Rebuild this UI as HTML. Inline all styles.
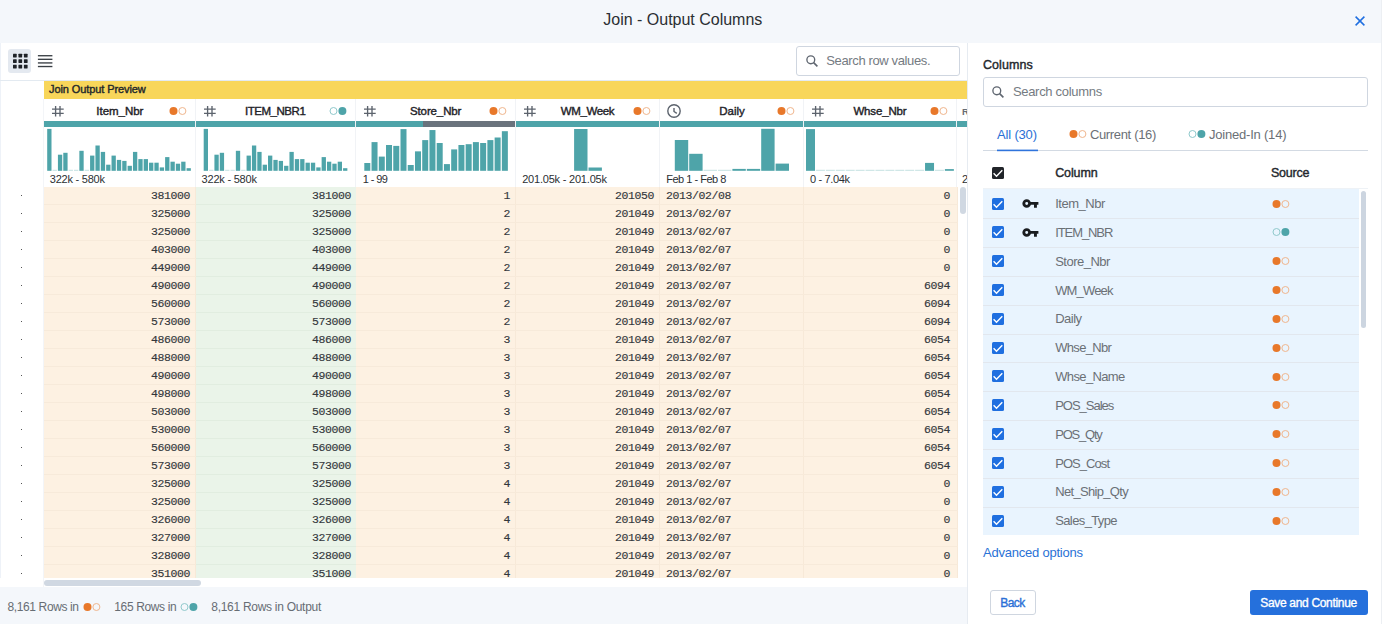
<!DOCTYPE html>
<html><head><meta charset="utf-8">
<style>
*{box-sizing:border-box;margin:0;padding:0}
html,body{width:1382px;height:624px;overflow:hidden;background:#fff;font-family:"Liberation Sans",sans-serif}
body{position:relative}
.a{position:absolute;display:block}
.t{position:absolute;white-space:nowrap}
.colsep{position:absolute;top:99px;height:88px;width:1px;background:#f1f3f6}
.teal{position:absolute;top:121px;height:6px;background:#4ea4a9}
.cell{position:absolute;height:18px;border-bottom:1px solid rgba(120,90,40,0.045);font:11.5px/18px "Liberation Mono",monospace;letter-spacing:-0.4px;color:#33373c;padding:0 5px 0 6px;-webkit-text-stroke:0.15px #33373c}
.o{background:#fdf1e2;border-right:1px solid rgba(150,110,50,0.05)}
.g{background:#eaf4e9;border-bottom-color:rgba(40,90,40,0.045)}
.r{text-align:right}
.rowdot{position:absolute;left:21px;width:1px;height:1px;background:#555}
</style></head><body>

<div class="a" style="left:0;top:0;width:1382px;height:43px;background:#f4f7fb"></div>
<div class="t" style="left:603.30px;top:12px;font:normal 16px/1 'Liberation Sans',sans-serif;color:#2b2f33;letter-spacing:-0.009px;">Join - Output Columns</div>
<svg class="a" style="left:1354.7px;top:15.5px" width="10" height="10" viewBox="0 0 10 10"><path d="M0.6 0.6L9.4 9.4M9.4 0.6L0.6 9.4" stroke="#1f6fe0" stroke-width="1.5"/></svg>
<div class="a" style="left:0;top:43px;width:1px;height:545px;background:#eef2f8"></div>
<div class="a" style="left:1381px;top:0;width:1px;height:624px;background:#eceff3"></div>
<div class="a" style="left:8px;top:49px;width:23px;height:24px;border-radius:3px;background:#e4e9f0"></div>
<svg class="a" style="left:0;top:40px" width="60" height="40" viewBox="0 40 60 40"><rect x="13.00" y="53.80" width="3.7" height="3.7" rx="0.4" fill="#1e2227"/><rect x="18.45" y="53.80" width="3.7" height="3.7" rx="0.4" fill="#1e2227"/><rect x="23.90" y="53.80" width="3.7" height="3.7" rx="0.4" fill="#1e2227"/><rect x="13.00" y="59.25" width="3.7" height="3.7" rx="0.4" fill="#1e2227"/><rect x="18.45" y="59.25" width="3.7" height="3.7" rx="0.4" fill="#1e2227"/><rect x="23.90" y="59.25" width="3.7" height="3.7" rx="0.4" fill="#1e2227"/><rect x="13.00" y="64.70" width="3.7" height="3.7" rx="0.4" fill="#1e2227"/><rect x="18.45" y="64.70" width="3.7" height="3.7" rx="0.4" fill="#1e2227"/><rect x="23.90" y="64.70" width="3.7" height="3.7" rx="0.4" fill="#1e2227"/><rect x="37.9" y="55.05" width="14.5" height="1.35" fill="#3a3f45"/><rect x="37.9" y="58.65" width="14.5" height="1.35" fill="#3a3f45"/><rect x="37.9" y="62.25" width="14.5" height="1.35" fill="#3a3f45"/><rect x="37.9" y="65.85" width="14.5" height="1.35" fill="#3a3f45"/></svg>
<div class="a" style="left:796px;top:46px;width:164px;height:30px;border:1px solid #cfd6e0;border-radius:3px;background:#fff"></div>
<svg class="a" style="left:806px;top:55.3px" width="13" height="12" viewBox="0 0 13 12"><circle cx="4.8" cy="4.8" r="3.9" stroke="#5f6670" stroke-width="1.35" fill="none"/><path d="M7.6 7.6L11.4 11.4" stroke="#5f6670" stroke-width="1.6"/></svg>
<div class="t" style="left:826.30px;top:54px;font:normal 13px/1 'Liberation Sans',sans-serif;color:#757b82;letter-spacing:-0.374px;">Search row values.</div>
<div class="a" style="left:967px;top:43px;width:1px;height:581px;background:#e6ebf1"></div>
<div class="a" style="left:0;top:80px;width:967px;height:1px;background:#e3eaf1"></div>
<div class="a" style="left:44px;top:81px;width:923px;height:18px;background:#f8d65a"></div>
<div class="t" style="left:49.00px;top:84px;font:normal 11px/1 'Liberation Sans',sans-serif;color:#23272b;letter-spacing:-0.094px;-webkit-text-stroke:0.4px #23272b;">Join Output Preview</div>
<div class="colsep" style="left:195px"></div>
<svg class="a" style="left:52px;top:105px" width="13" height="12" viewBox="0 0 13 12"><path d="M3.6 1V11.4M8 1V11.4M0 4.1H11.7M0 8.3H11.7" stroke="#5c636d" stroke-width="1.35" fill="none"/></svg>
<div class="t" style="left:96.30px;top:106px;font:normal 11.5px/1 'Liberation Sans',sans-serif;color:#1e2227;letter-spacing:-0.026px;-webkit-text-stroke:0.4px #1e2227;">Item_Nbr</div>
<svg class="a" style="left:168.50px;top:105.75px" width="18" height="10" viewBox="0 0 18 10"><circle cx="4.5" cy="5" r="4" fill="#e8782a"/><circle cx="13.4" cy="5" r="3.5" fill="none" stroke="#f0b68e" stroke-width="1"/></svg>
<div class="teal" style="left:44px;width:151px"></div>
<div class="t" style="left:49.80px;top:174px;font:normal 11px/1 'Liberation Sans',sans-serif;color:#2b2f33;letter-spacing:-0.230px;">322k - 580k</div>
<div class="colsep" style="left:355px"></div>
<svg class="a" style="left:204px;top:105px" width="13" height="12" viewBox="0 0 13 12"><path d="M3.6 1V11.4M8 1V11.4M0 4.1H11.7M0 8.3H11.7" stroke="#5c636d" stroke-width="1.35" fill="none"/></svg>
<div class="t" style="left:244.90px;top:106px;font:normal 11.5px/1 'Liberation Sans',sans-serif;color:#1e2227;letter-spacing:-0.454px;-webkit-text-stroke:0.4px #1e2227;">ITEM_NBR1</div>
<svg class="a" style="left:328.50px;top:105.75px" width="18" height="10" viewBox="0 0 18 10"><circle cx="4.5" cy="5" r="3.5" fill="none" stroke="#90c9cc" stroke-width="1"/><circle cx="13.4" cy="5" r="4" fill="#4ea4a9"/></svg>
<div class="teal" style="left:196px;width:159px"></div>
<div class="t" style="left:201.60px;top:174px;font:normal 11px/1 'Liberation Sans',sans-serif;color:#2b2f33;letter-spacing:-0.220px;">322k - 580k</div>
<div class="colsep" style="left:515px"></div>
<svg class="a" style="left:364px;top:105px" width="13" height="12" viewBox="0 0 13 12"><path d="M3.6 1V11.4M8 1V11.4M0 4.1H11.7M0 8.3H11.7" stroke="#5c636d" stroke-width="1.35" fill="none"/></svg>
<div class="t" style="left:410.00px;top:106px;font:normal 11.5px/1 'Liberation Sans',sans-serif;color:#1e2227;letter-spacing:-0.126px;-webkit-text-stroke:0.4px #1e2227;">Store_Nbr</div>
<svg class="a" style="left:488.50px;top:105.75px" width="18" height="10" viewBox="0 0 18 10"><circle cx="4.5" cy="5" r="4" fill="#e8782a"/><circle cx="13.4" cy="5" r="3.5" fill="none" stroke="#f0b68e" stroke-width="1"/></svg>
<div class="teal" style="left:356px;width:67px"></div><div class="teal" style="left:423px;width:92px;background:#6a737d"></div>
<div class="t" style="left:362.70px;top:174px;font:normal 11px/1 'Liberation Sans',sans-serif;color:#2b2f33;letter-spacing:-0.565px;">1 - 99</div>
<div class="colsep" style="left:659px"></div>
<svg class="a" style="left:524px;top:105px" width="13" height="12" viewBox="0 0 13 12"><path d="M3.6 1V11.4M8 1V11.4M0 4.1H11.7M0 8.3H11.7" stroke="#5c636d" stroke-width="1.35" fill="none"/></svg>
<div class="t" style="left:560.70px;top:106px;font:normal 11.5px/1 'Liberation Sans',sans-serif;color:#1e2227;letter-spacing:-0.360px;-webkit-text-stroke:0.4px #1e2227;">WM_Week</div>
<svg class="a" style="left:632.50px;top:105.75px" width="18" height="10" viewBox="0 0 18 10"><circle cx="4.5" cy="5" r="4" fill="#e8782a"/><circle cx="13.4" cy="5" r="3.5" fill="none" stroke="#f0b68e" stroke-width="1"/></svg>
<div class="teal" style="left:516px;width:143px"></div>
<div class="t" style="left:522.20px;top:174px;font:normal 11px/1 'Liberation Sans',sans-serif;color:#2b2f33;letter-spacing:-0.206px;">201.05k - 201.05k</div>
<div class="colsep" style="left:803px"></div>
<svg class="a" style="left:667px;top:104px" width="14" height="14" viewBox="0 0 14 14"><circle cx="7" cy="7" r="6.2" stroke="#5c636d" stroke-width="1.4" fill="none"/><path d="M7 3.9V7.5L9.8 9.4" stroke="#5c636d" stroke-width="1.4" fill="none"/></svg>
<div class="t" style="left:719.20px;top:106px;font:normal 11.5px/1 'Liberation Sans',sans-serif;color:#1e2227;letter-spacing:0.009px;-webkit-text-stroke:0.4px #1e2227;">Daily</div>
<svg class="a" style="left:776.50px;top:105.75px" width="18" height="10" viewBox="0 0 18 10"><circle cx="4.5" cy="5" r="4" fill="#e8782a"/><circle cx="13.4" cy="5" r="3.5" fill="none" stroke="#f0b68e" stroke-width="1"/></svg>
<div class="teal" style="left:660px;width:143px"></div>
<div class="t" style="left:666.20px;top:174px;font:normal 11px/1 'Liberation Sans',sans-serif;color:#2b2f33;letter-spacing:-0.486px;">Feb 1 - Feb 8</div>
<div class="colsep" style="left:956px"></div>
<svg class="a" style="left:812px;top:105px" width="13" height="12" viewBox="0 0 13 12"><path d="M3.6 1V11.4M8 1V11.4M0 4.1H11.7M0 8.3H11.7" stroke="#5c636d" stroke-width="1.35" fill="none"/></svg>
<div class="t" style="left:853.40px;top:106px;font:normal 11.5px/1 'Liberation Sans',sans-serif;color:#1e2227;letter-spacing:-0.145px;-webkit-text-stroke:0.4px #1e2227;">Whse_Nbr</div>
<svg class="a" style="left:929.50px;top:105.75px" width="18" height="10" viewBox="0 0 18 10"><circle cx="4.5" cy="5" r="4" fill="#e8782a"/><circle cx="13.4" cy="5" r="3.5" fill="none" stroke="#f0b68e" stroke-width="1"/></svg>
<div class="teal" style="left:804px;width:152px"></div>
<div class="t" style="left:810.00px;top:174px;font:normal 11px/1 'Liberation Sans',sans-serif;color:#2b2f33;letter-spacing:-0.343px;">0 - 7.04k</div>
<div class="a" style="left:957px;top:121px;width:10px;height:6px;background:#4ea4a9"></div>
<div class="a" style="left:961px;top:99px;width:6px;height:22px;overflow:hidden"><div class="t" style="left:1px;top:8px;font:bold 9.5px/1 'Liberation Sans';color:#666d76">RBC</div></div>
<div class="a" style="left:957px;top:172px;width:10px;height:14px;overflow:hidden"><div class="t" style="left:5.00px;top:2px;font:normal 11px/1 'Liberation Sans',sans-serif;color:#2b2f33;letter-spacing:0.000px;">2</div></div>
<svg class="a" style="left:0;top:120px" width="967" height="55" viewBox="0 120 967 55"><rect x="47.20" y="128.90" width="4.3" height="41.90" fill="#4ea4a9"/><rect x="52.56" y="169.80" width="4.3" height="1" fill="#c5e1e2"/><rect x="57.92" y="154.70" width="4.3" height="16.10" fill="#4ea4a9"/><rect x="63.28" y="152.80" width="4.3" height="18.00" fill="#4ea4a9"/><rect x="68.64" y="169.80" width="4.3" height="1" fill="#c5e1e2"/><rect x="74.00" y="169.80" width="4.3" height="1" fill="#c5e1e2"/><rect x="79.36" y="150.80" width="4.3" height="20.00" fill="#4ea4a9"/><rect x="84.72" y="169.80" width="4.3" height="1" fill="#c5e1e2"/><rect x="90.08" y="155.60" width="4.3" height="15.20" fill="#4ea4a9"/><rect x="95.44" y="145.50" width="4.3" height="25.30" fill="#4ea4a9"/><rect x="100.80" y="151.90" width="4.3" height="18.90" fill="#4ea4a9"/><rect x="106.16" y="164.70" width="4.3" height="6.10" fill="#4ea4a9"/><rect x="111.52" y="155.60" width="4.3" height="15.20" fill="#4ea4a9"/><rect x="116.88" y="159.90" width="4.3" height="10.90" fill="#4ea4a9"/><rect x="122.24" y="160.90" width="4.3" height="9.90" fill="#4ea4a9"/><rect x="127.60" y="165.80" width="4.3" height="5.00" fill="#4ea4a9"/><rect x="132.96" y="151.90" width="4.3" height="18.90" fill="#4ea4a9"/><rect x="138.32" y="159.10" width="4.3" height="11.70" fill="#4ea4a9"/><rect x="143.68" y="159.10" width="4.3" height="11.70" fill="#4ea4a9"/><rect x="149.04" y="162.70" width="4.3" height="8.10" fill="#4ea4a9"/><rect x="154.40" y="162.70" width="4.3" height="8.10" fill="#4ea4a9"/><rect x="159.76" y="167.40" width="4.3" height="3.40" fill="#4ea4a9"/><rect x="165.12" y="157.10" width="4.3" height="13.70" fill="#4ea4a9"/><rect x="170.48" y="161.70" width="4.3" height="9.10" fill="#4ea4a9"/><rect x="175.84" y="163.70" width="4.3" height="7.10" fill="#4ea4a9"/><rect x="181.20" y="161.70" width="4.3" height="9.10" fill="#4ea4a9"/><rect x="186.56" y="168.20" width="4.3" height="2.60" fill="#4ea4a9"/><rect x="203.70" y="128.90" width="4.3" height="41.90" fill="#4ea4a9"/><rect x="209.06" y="169.80" width="4.3" height="1" fill="#c5e1e2"/><rect x="214.42" y="154.70" width="4.3" height="16.10" fill="#4ea4a9"/><rect x="219.78" y="152.80" width="4.3" height="18.00" fill="#4ea4a9"/><rect x="225.14" y="169.80" width="4.3" height="1" fill="#c5e1e2"/><rect x="230.50" y="169.80" width="4.3" height="1" fill="#c5e1e2"/><rect x="235.86" y="150.80" width="4.3" height="20.00" fill="#4ea4a9"/><rect x="241.22" y="169.80" width="4.3" height="1" fill="#c5e1e2"/><rect x="246.58" y="155.60" width="4.3" height="15.20" fill="#4ea4a9"/><rect x="251.94" y="145.50" width="4.3" height="25.30" fill="#4ea4a9"/><rect x="257.30" y="151.90" width="4.3" height="18.90" fill="#4ea4a9"/><rect x="262.66" y="164.70" width="4.3" height="6.10" fill="#4ea4a9"/><rect x="268.02" y="155.60" width="4.3" height="15.20" fill="#4ea4a9"/><rect x="273.38" y="159.90" width="4.3" height="10.90" fill="#4ea4a9"/><rect x="278.74" y="160.90" width="4.3" height="9.90" fill="#4ea4a9"/><rect x="284.10" y="165.80" width="4.3" height="5.00" fill="#4ea4a9"/><rect x="289.46" y="151.90" width="4.3" height="18.90" fill="#4ea4a9"/><rect x="294.82" y="159.10" width="4.3" height="11.70" fill="#4ea4a9"/><rect x="300.18" y="159.10" width="4.3" height="11.70" fill="#4ea4a9"/><rect x="305.54" y="162.70" width="4.3" height="8.10" fill="#4ea4a9"/><rect x="310.90" y="162.70" width="4.3" height="8.10" fill="#4ea4a9"/><rect x="316.26" y="167.40" width="4.3" height="3.40" fill="#4ea4a9"/><rect x="321.62" y="157.10" width="4.3" height="13.70" fill="#4ea4a9"/><rect x="326.98" y="161.70" width="4.3" height="9.10" fill="#4ea4a9"/><rect x="332.34" y="163.70" width="4.3" height="7.10" fill="#4ea4a9"/><rect x="337.70" y="161.70" width="4.3" height="9.10" fill="#4ea4a9"/><rect x="343.06" y="168.20" width="4.3" height="2.60" fill="#4ea4a9"/><rect x="364.30" y="163.00" width="6.0" height="7.80" fill="#4ea4a9"/><rect x="371.54" y="142.10" width="6.0" height="28.70" fill="#4ea4a9"/><rect x="378.78" y="156.60" width="6.0" height="14.20" fill="#4ea4a9"/><rect x="386.02" y="145.00" width="6.0" height="25.80" fill="#4ea4a9"/><rect x="393.26" y="145.90" width="6.0" height="24.90" fill="#4ea4a9"/><rect x="400.50" y="129.10" width="6.0" height="41.70" fill="#4ea4a9"/><rect x="407.74" y="165.00" width="6.0" height="5.80" fill="#4ea4a9"/><rect x="414.98" y="151.35" width="6.0" height="19.45" fill="#4ea4a9"/><rect x="422.22" y="140.10" width="6.0" height="30.70" fill="#4ea4a9"/><rect x="429.46" y="130.05" width="6.0" height="40.75" fill="#4ea4a9"/><rect x="436.70" y="143.00" width="6.0" height="27.80" fill="#4ea4a9"/><rect x="443.94" y="164.10" width="6.0" height="6.70" fill="#4ea4a9"/><rect x="451.18" y="149.40" width="6.0" height="21.40" fill="#4ea4a9"/><rect x="458.42" y="145.00" width="6.0" height="25.80" fill="#4ea4a9"/><rect x="465.66" y="144.20" width="6.0" height="26.60" fill="#4ea4a9"/><rect x="472.90" y="142.10" width="6.0" height="28.70" fill="#4ea4a9"/><rect x="480.14" y="143.00" width="6.0" height="27.80" fill="#4ea4a9"/><rect x="487.38" y="140.10" width="6.0" height="30.70" fill="#4ea4a9"/><rect x="494.62" y="137.50" width="6.0" height="33.30" fill="#4ea4a9"/><rect x="501.86" y="131.20" width="6.0" height="39.60" fill="#4ea4a9"/><rect x="574.10" y="129.00" width="13.4" height="41.80" fill="#4ea4a9"/><rect x="588.50" y="167.50" width="13.4" height="3.30" fill="#4ea4a9"/><rect x="674.80" y="140.00" width="13.4" height="30.80" fill="#4ea4a9"/><rect x="689.20" y="153.80" width="13.4" height="17.00" fill="#4ea4a9"/><rect x="703.60" y="169.80" width="13.4" height="1" fill="#c5e1e2"/><rect x="718.00" y="169.80" width="13.4" height="1" fill="#c5e1e2"/><rect x="732.40" y="168.90" width="13.4" height="1.90" fill="#4ea4a9"/><rect x="746.80" y="168.90" width="13.4" height="1.90" fill="#4ea4a9"/><rect x="761.20" y="128.80" width="13.4" height="42.00" fill="#4ea4a9"/><rect x="775.60" y="163.60" width="13.4" height="7.20" fill="#4ea4a9"/><rect x="806.00" y="129.10" width="9.0" height="41.70" fill="#4ea4a9"/><rect x="815.92" y="169.80" width="9.0" height="1" fill="#c5e1e2"/><rect x="825.84" y="169.80" width="9.0" height="1" fill="#c5e1e2"/><rect x="835.76" y="169.80" width="9.0" height="1" fill="#c5e1e2"/><rect x="845.68" y="169.80" width="9.0" height="1" fill="#c5e1e2"/><rect x="855.60" y="169.80" width="9.0" height="1" fill="#c5e1e2"/><rect x="865.52" y="169.80" width="9.0" height="1" fill="#c5e1e2"/><rect x="875.44" y="169.80" width="9.0" height="1" fill="#c5e1e2"/><rect x="885.36" y="169.80" width="9.0" height="1" fill="#c5e1e2"/><rect x="895.28" y="169.80" width="9.0" height="1" fill="#c5e1e2"/><rect x="905.20" y="169.80" width="9.0" height="1" fill="#c5e1e2"/><rect x="915.12" y="169.80" width="9.0" height="1" fill="#c5e1e2"/><rect x="925.04" y="162.90" width="9.0" height="7.90" fill="#4ea4a9"/><rect x="934.96" y="169.80" width="9.0" height="1" fill="#c5e1e2"/><rect x="944.88" y="169.10" width="9.0" height="1.70" fill="#4ea4a9"/></svg>
<div class="rowdot" style="top:194.75px"></div>
<div class="cell o r" style="left:44px;top:186.75px;width:152px">381000</div>
<div class="cell g r" style="left:196px;top:186.75px;width:160px">381000</div>
<div class="cell o r" style="left:356px;top:186.75px;width:160px">1</div>
<div class="cell o r" style="left:516px;top:186.75px;width:144px">201050</div>
<div class="cell o" style="left:660px;top:186.75px;width:144px">2013/02/08</div>
<div class="cell o r" style="left:804px;top:186.75px;width:154px;padding-right:7px">0</div>
<div class="rowdot" style="top:212.75px"></div>
<div class="cell o r" style="left:44px;top:204.75px;width:152px">325000</div>
<div class="cell g r" style="left:196px;top:204.75px;width:160px">325000</div>
<div class="cell o r" style="left:356px;top:204.75px;width:160px">2</div>
<div class="cell o r" style="left:516px;top:204.75px;width:144px">201049</div>
<div class="cell o" style="left:660px;top:204.75px;width:144px">2013/02/07</div>
<div class="cell o r" style="left:804px;top:204.75px;width:154px;padding-right:7px">0</div>
<div class="rowdot" style="top:230.75px"></div>
<div class="cell o r" style="left:44px;top:222.75px;width:152px">325000</div>
<div class="cell g r" style="left:196px;top:222.75px;width:160px">325000</div>
<div class="cell o r" style="left:356px;top:222.75px;width:160px">2</div>
<div class="cell o r" style="left:516px;top:222.75px;width:144px">201049</div>
<div class="cell o" style="left:660px;top:222.75px;width:144px">2013/02/07</div>
<div class="cell o r" style="left:804px;top:222.75px;width:154px;padding-right:7px">0</div>
<div class="rowdot" style="top:248.75px"></div>
<div class="cell o r" style="left:44px;top:240.75px;width:152px">403000</div>
<div class="cell g r" style="left:196px;top:240.75px;width:160px">403000</div>
<div class="cell o r" style="left:356px;top:240.75px;width:160px">2</div>
<div class="cell o r" style="left:516px;top:240.75px;width:144px">201049</div>
<div class="cell o" style="left:660px;top:240.75px;width:144px">2013/02/07</div>
<div class="cell o r" style="left:804px;top:240.75px;width:154px;padding-right:7px">0</div>
<div class="rowdot" style="top:266.75px"></div>
<div class="cell o r" style="left:44px;top:258.75px;width:152px">449000</div>
<div class="cell g r" style="left:196px;top:258.75px;width:160px">449000</div>
<div class="cell o r" style="left:356px;top:258.75px;width:160px">2</div>
<div class="cell o r" style="left:516px;top:258.75px;width:144px">201049</div>
<div class="cell o" style="left:660px;top:258.75px;width:144px">2013/02/07</div>
<div class="cell o r" style="left:804px;top:258.75px;width:154px;padding-right:7px">0</div>
<div class="rowdot" style="top:284.75px"></div>
<div class="cell o r" style="left:44px;top:276.75px;width:152px">490000</div>
<div class="cell g r" style="left:196px;top:276.75px;width:160px">490000</div>
<div class="cell o r" style="left:356px;top:276.75px;width:160px">2</div>
<div class="cell o r" style="left:516px;top:276.75px;width:144px">201049</div>
<div class="cell o" style="left:660px;top:276.75px;width:144px">2013/02/07</div>
<div class="cell o r" style="left:804px;top:276.75px;width:154px;padding-right:7px">6094</div>
<div class="rowdot" style="top:302.75px"></div>
<div class="cell o r" style="left:44px;top:294.75px;width:152px">560000</div>
<div class="cell g r" style="left:196px;top:294.75px;width:160px">560000</div>
<div class="cell o r" style="left:356px;top:294.75px;width:160px">2</div>
<div class="cell o r" style="left:516px;top:294.75px;width:144px">201049</div>
<div class="cell o" style="left:660px;top:294.75px;width:144px">2013/02/07</div>
<div class="cell o r" style="left:804px;top:294.75px;width:154px;padding-right:7px">6094</div>
<div class="rowdot" style="top:320.75px"></div>
<div class="cell o r" style="left:44px;top:312.75px;width:152px">573000</div>
<div class="cell g r" style="left:196px;top:312.75px;width:160px">573000</div>
<div class="cell o r" style="left:356px;top:312.75px;width:160px">2</div>
<div class="cell o r" style="left:516px;top:312.75px;width:144px">201049</div>
<div class="cell o" style="left:660px;top:312.75px;width:144px">2013/02/07</div>
<div class="cell o r" style="left:804px;top:312.75px;width:154px;padding-right:7px">6094</div>
<div class="rowdot" style="top:338.75px"></div>
<div class="cell o r" style="left:44px;top:330.75px;width:152px">486000</div>
<div class="cell g r" style="left:196px;top:330.75px;width:160px">486000</div>
<div class="cell o r" style="left:356px;top:330.75px;width:160px">3</div>
<div class="cell o r" style="left:516px;top:330.75px;width:144px">201049</div>
<div class="cell o" style="left:660px;top:330.75px;width:144px">2013/02/07</div>
<div class="cell o r" style="left:804px;top:330.75px;width:154px;padding-right:7px">6054</div>
<div class="rowdot" style="top:356.75px"></div>
<div class="cell o r" style="left:44px;top:348.75px;width:152px">488000</div>
<div class="cell g r" style="left:196px;top:348.75px;width:160px">488000</div>
<div class="cell o r" style="left:356px;top:348.75px;width:160px">3</div>
<div class="cell o r" style="left:516px;top:348.75px;width:144px">201049</div>
<div class="cell o" style="left:660px;top:348.75px;width:144px">2013/02/07</div>
<div class="cell o r" style="left:804px;top:348.75px;width:154px;padding-right:7px">6054</div>
<div class="rowdot" style="top:374.75px"></div>
<div class="cell o r" style="left:44px;top:366.75px;width:152px">490000</div>
<div class="cell g r" style="left:196px;top:366.75px;width:160px">490000</div>
<div class="cell o r" style="left:356px;top:366.75px;width:160px">3</div>
<div class="cell o r" style="left:516px;top:366.75px;width:144px">201049</div>
<div class="cell o" style="left:660px;top:366.75px;width:144px">2013/02/07</div>
<div class="cell o r" style="left:804px;top:366.75px;width:154px;padding-right:7px">6054</div>
<div class="rowdot" style="top:392.75px"></div>
<div class="cell o r" style="left:44px;top:384.75px;width:152px">498000</div>
<div class="cell g r" style="left:196px;top:384.75px;width:160px">498000</div>
<div class="cell o r" style="left:356px;top:384.75px;width:160px">3</div>
<div class="cell o r" style="left:516px;top:384.75px;width:144px">201049</div>
<div class="cell o" style="left:660px;top:384.75px;width:144px">2013/02/07</div>
<div class="cell o r" style="left:804px;top:384.75px;width:154px;padding-right:7px">6054</div>
<div class="rowdot" style="top:410.75px"></div>
<div class="cell o r" style="left:44px;top:402.75px;width:152px">503000</div>
<div class="cell g r" style="left:196px;top:402.75px;width:160px">503000</div>
<div class="cell o r" style="left:356px;top:402.75px;width:160px">3</div>
<div class="cell o r" style="left:516px;top:402.75px;width:144px">201049</div>
<div class="cell o" style="left:660px;top:402.75px;width:144px">2013/02/07</div>
<div class="cell o r" style="left:804px;top:402.75px;width:154px;padding-right:7px">6054</div>
<div class="rowdot" style="top:428.75px"></div>
<div class="cell o r" style="left:44px;top:420.75px;width:152px">530000</div>
<div class="cell g r" style="left:196px;top:420.75px;width:160px">530000</div>
<div class="cell o r" style="left:356px;top:420.75px;width:160px">3</div>
<div class="cell o r" style="left:516px;top:420.75px;width:144px">201049</div>
<div class="cell o" style="left:660px;top:420.75px;width:144px">2013/02/07</div>
<div class="cell o r" style="left:804px;top:420.75px;width:154px;padding-right:7px">6054</div>
<div class="rowdot" style="top:446.75px"></div>
<div class="cell o r" style="left:44px;top:438.75px;width:152px">560000</div>
<div class="cell g r" style="left:196px;top:438.75px;width:160px">560000</div>
<div class="cell o r" style="left:356px;top:438.75px;width:160px">3</div>
<div class="cell o r" style="left:516px;top:438.75px;width:144px">201049</div>
<div class="cell o" style="left:660px;top:438.75px;width:144px">2013/02/07</div>
<div class="cell o r" style="left:804px;top:438.75px;width:154px;padding-right:7px">6054</div>
<div class="rowdot" style="top:464.75px"></div>
<div class="cell o r" style="left:44px;top:456.75px;width:152px">573000</div>
<div class="cell g r" style="left:196px;top:456.75px;width:160px">573000</div>
<div class="cell o r" style="left:356px;top:456.75px;width:160px">3</div>
<div class="cell o r" style="left:516px;top:456.75px;width:144px">201049</div>
<div class="cell o" style="left:660px;top:456.75px;width:144px">2013/02/07</div>
<div class="cell o r" style="left:804px;top:456.75px;width:154px;padding-right:7px">6054</div>
<div class="rowdot" style="top:482.75px"></div>
<div class="cell o r" style="left:44px;top:474.75px;width:152px">325000</div>
<div class="cell g r" style="left:196px;top:474.75px;width:160px">325000</div>
<div class="cell o r" style="left:356px;top:474.75px;width:160px">4</div>
<div class="cell o r" style="left:516px;top:474.75px;width:144px">201049</div>
<div class="cell o" style="left:660px;top:474.75px;width:144px">2013/02/07</div>
<div class="cell o r" style="left:804px;top:474.75px;width:154px;padding-right:7px">0</div>
<div class="rowdot" style="top:500.75px"></div>
<div class="cell o r" style="left:44px;top:492.75px;width:152px">325000</div>
<div class="cell g r" style="left:196px;top:492.75px;width:160px">325000</div>
<div class="cell o r" style="left:356px;top:492.75px;width:160px">4</div>
<div class="cell o r" style="left:516px;top:492.75px;width:144px">201049</div>
<div class="cell o" style="left:660px;top:492.75px;width:144px">2013/02/07</div>
<div class="cell o r" style="left:804px;top:492.75px;width:154px;padding-right:7px">0</div>
<div class="rowdot" style="top:518.75px"></div>
<div class="cell o r" style="left:44px;top:510.75px;width:152px">326000</div>
<div class="cell g r" style="left:196px;top:510.75px;width:160px">326000</div>
<div class="cell o r" style="left:356px;top:510.75px;width:160px">4</div>
<div class="cell o r" style="left:516px;top:510.75px;width:144px">201049</div>
<div class="cell o" style="left:660px;top:510.75px;width:144px">2013/02/07</div>
<div class="cell o r" style="left:804px;top:510.75px;width:154px;padding-right:7px">0</div>
<div class="rowdot" style="top:536.75px"></div>
<div class="cell o r" style="left:44px;top:528.75px;width:152px">327000</div>
<div class="cell g r" style="left:196px;top:528.75px;width:160px">327000</div>
<div class="cell o r" style="left:356px;top:528.75px;width:160px">4</div>
<div class="cell o r" style="left:516px;top:528.75px;width:144px">201049</div>
<div class="cell o" style="left:660px;top:528.75px;width:144px">2013/02/07</div>
<div class="cell o r" style="left:804px;top:528.75px;width:154px;padding-right:7px">0</div>
<div class="rowdot" style="top:554.75px"></div>
<div class="cell o r" style="left:44px;top:546.75px;width:152px">328000</div>
<div class="cell g r" style="left:196px;top:546.75px;width:160px">328000</div>
<div class="cell o r" style="left:356px;top:546.75px;width:160px">4</div>
<div class="cell o r" style="left:516px;top:546.75px;width:144px">201049</div>
<div class="cell o" style="left:660px;top:546.75px;width:144px">2013/02/07</div>
<div class="cell o r" style="left:804px;top:546.75px;width:154px;padding-right:7px">0</div>
<div class="rowdot" style="top:572.75px"></div>
<div class="cell o r" style="left:44px;top:564.75px;width:152px">351000</div>
<div class="cell g r" style="left:196px;top:564.75px;width:160px">351000</div>
<div class="cell o r" style="left:356px;top:564.75px;width:160px">4</div>
<div class="cell o r" style="left:516px;top:564.75px;width:144px">201049</div>
<div class="cell o" style="left:660px;top:564.75px;width:144px">2013/02/07</div>
<div class="cell o r" style="left:804px;top:564.75px;width:154px;padding-right:7px">0</div>
<div class="a" style="left:0;top:578px;width:967px;height:10px;background:#fff"></div>
<div class="a" style="left:44px;top:580px;width:157px;height:6px;border-radius:3px;background:#d0d8e2"></div>
<div class="a" style="left:960px;top:187px;width:6px;height:27px;border-radius:3px;background:#d0d8e2"></div>
<div class="a" style="left:0;top:587px;width:967px;height:37px;background:#f4f7fb"></div>
<div class="a" style="left:43px;top:99px;width:1px;height:488px;background:#f3f5f8"></div>
<div class="t" style="left:7.50px;top:601px;font:normal 12px/1 'Liberation Sans',sans-serif;color:#676d74;letter-spacing:-0.378px;">8,161 Rows in</div>
<svg class="a" style="left:82.80px;top:601.50px" width="18" height="10" viewBox="0 0 18 10"><circle cx="4.5" cy="5" r="4" fill="#e8782a"/><circle cx="13.4" cy="5" r="3.5" fill="none" stroke="#f0b68e" stroke-width="1"/></svg>
<div class="t" style="left:114.30px;top:601px;font:normal 12px/1 'Liberation Sans',sans-serif;color:#676d74;letter-spacing:-0.373px;">165 Rows in</div>
<svg class="a" style="left:180.40px;top:601.50px" width="18" height="10" viewBox="0 0 18 10"><circle cx="4.5" cy="5" r="3.5" fill="none" stroke="#90c9cc" stroke-width="1"/><circle cx="13.4" cy="5" r="4" fill="#4ea4a9"/></svg>
<div class="t" style="left:211.30px;top:601px;font:normal 12px/1 'Liberation Sans',sans-serif;color:#676d74;letter-spacing:-0.285px;">8,161 Rows in Output</div>
<div class="t" style="left:983.00px;top:59px;font:normal 12.5px/1 'Liberation Sans',sans-serif;color:#24282d;letter-spacing:0.065px;-webkit-text-stroke:0.4px #24282d;">Columns</div>
<div class="a" style="left:983px;top:77px;width:385px;height:30px;border:1px solid #cfd6e0;border-radius:3px;background:#fff"></div>
<svg class="a" style="left:992px;top:86px" width="13" height="12" viewBox="0 0 13 12"><circle cx="4.8" cy="4.8" r="3.9" stroke="#5f6670" stroke-width="1.35" fill="none"/><path d="M7.6 7.6L11.4 11.4" stroke="#5f6670" stroke-width="1.6"/></svg>
<div class="t" style="left:1012.90px;top:85px;font:normal 13px/1 'Liberation Sans',sans-serif;color:#757b82;letter-spacing:-0.301px;">Search columns</div>
<div class="a" style="left:983px;top:150px;width:385px;height:1px;background:#d3dae3"></div>
<div class="t" style="left:997.00px;top:128px;font:normal 13px/1 'Liberation Sans',sans-serif;color:#2a6fd6;letter-spacing:-0.170px;">All (30)</div>
<svg class="a" style="left:990px;top:145px" width="60" height="10" viewBox="990 145 60 10"><rect x="997" y="149.6" width="41" height="1.6" fill="#2f74dc"/></svg>
<svg class="a" style="left:1068.90px;top:129.40px" width="18" height="10" viewBox="0 0 18 10"><circle cx="4.5" cy="5" r="4" fill="#e8782a"/><circle cx="13.4" cy="5" r="3.5" fill="none" stroke="#f0b68e" stroke-width="1"/></svg>
<div class="t" style="left:1089.90px;top:128px;font:normal 13px/1 'Liberation Sans',sans-serif;color:#6b7076;letter-spacing:-0.336px;">Current (16)</div>
<svg class="a" style="left:1188.20px;top:129.40px" width="18" height="10" viewBox="0 0 18 10"><circle cx="4.5" cy="5" r="3.5" fill="none" stroke="#90c9cc" stroke-width="1"/><circle cx="13.4" cy="5" r="4" fill="#4ea4a9"/></svg>
<div class="t" style="left:1209.00px;top:128px;font:normal 13px/1 'Liberation Sans',sans-serif;color:#6b7076;letter-spacing:-0.209px;">Joined-In (14)</div>
<svg class="a" style="left:992px;top:167px" width="12" height="12" viewBox="0 0 12 12"><rect width="12" height="12" rx="1.5" fill="#212429"/><path d="M1.6 6.3L4.5 9.2L10.3 3.3" stroke="#fff" stroke-width="1.4" fill="none"/></svg>
<div class="t" style="left:1055.20px;top:167px;font:normal 12.5px/1 'Liberation Sans',sans-serif;color:#24282d;letter-spacing:-0.113px;-webkit-text-stroke:0.4px #24282d;">Column</div>
<div class="t" style="left:1271.00px;top:167px;font:normal 12.5px/1 'Liberation Sans',sans-serif;color:#24282d;letter-spacing:-0.219px;-webkit-text-stroke:0.4px #24282d;">Source</div>
<div class="a" style="left:983px;top:188px;width:385px;height:1px;background:#eef2f6"></div>
<div class="a" style="left:983px;top:189px;width:376px;height:346px;background:#e9f4fe"></div>
<svg class="a" style="left:992px;top:198px" width="12" height="12" viewBox="0 0 12 12"><rect width="12" height="12" rx="1.5" fill="#1f6fe0"/><path d="M1.6 6.3L4.5 9.2L10.3 3.3" stroke="#fff" stroke-width="1.4" fill="none"/></svg>
<svg class="a" style="left:1022px;top:198px" width="17" height="11" viewBox="0 0 17 11"><circle cx="4.7" cy="5.5" r="2.9" stroke="#1a1c1f" stroke-width="2.85" fill="none"/><path d="M7.5 4.0H16.4V6.7H14.9V9.8H12V6.7H7.5Z" fill="#1a1c1f"/></svg>
<div class="t" style="left:1055.20px;top:197px;font:normal 13px/1 'Liberation Sans',sans-serif;color:#6b7076;letter-spacing:-0.467px;">Item_Nbr</div>
<svg class="a" style="left:1272.00px;top:198.60px" width="18" height="10" viewBox="0 0 18 10"><circle cx="4.5" cy="5" r="4" fill="#e8782a"/><circle cx="13.4" cy="5" r="3.5" fill="none" stroke="#f0b68e" stroke-width="1"/></svg>
<div class="a" style="left:983px;top:218px;width:376px;height:1px;background:#e2e7ee"></div>
<svg class="a" style="left:992px;top:226px" width="12" height="12" viewBox="0 0 12 12"><rect width="12" height="12" rx="1.5" fill="#1f6fe0"/><path d="M1.6 6.3L4.5 9.2L10.3 3.3" stroke="#fff" stroke-width="1.4" fill="none"/></svg>
<svg class="a" style="left:1022px;top:227px" width="17" height="11" viewBox="0 0 17 11"><circle cx="4.7" cy="5.5" r="2.9" stroke="#1a1c1f" stroke-width="2.85" fill="none"/><path d="M7.5 4.0H16.4V6.7H14.9V9.8H12V6.7H7.5Z" fill="#1a1c1f"/></svg>
<div class="t" style="left:1055.20px;top:226px;font:normal 13px/1 'Liberation Sans',sans-serif;color:#6b7076;letter-spacing:-1.088px;">ITEM_NBR</div>
<svg class="a" style="left:1272.00px;top:227.42px" width="18" height="10" viewBox="0 0 18 10"><circle cx="4.5" cy="5" r="3.5" fill="none" stroke="#90c9cc" stroke-width="1"/><circle cx="13.4" cy="5" r="4" fill="#4ea4a9"/></svg>
<div class="a" style="left:983px;top:247px;width:376px;height:1px;background:#e2e7ee"></div>
<svg class="a" style="left:992px;top:255px" width="12" height="12" viewBox="0 0 12 12"><rect width="12" height="12" rx="1.5" fill="#1f6fe0"/><path d="M1.6 6.3L4.5 9.2L10.3 3.3" stroke="#fff" stroke-width="1.4" fill="none"/></svg>
<div class="t" style="left:1055.20px;top:255px;font:normal 13px/1 'Liberation Sans',sans-serif;color:#6b7076;letter-spacing:-0.519px;">Store_Nbr</div>
<svg class="a" style="left:1272.00px;top:256.24px" width="18" height="10" viewBox="0 0 18 10"><circle cx="4.5" cy="5" r="4" fill="#e8782a"/><circle cx="13.4" cy="5" r="3.5" fill="none" stroke="#f0b68e" stroke-width="1"/></svg>
<div class="a" style="left:983px;top:276px;width:376px;height:1px;background:#e2e7ee"></div>
<svg class="a" style="left:992px;top:284px" width="12" height="12" viewBox="0 0 12 12"><rect width="12" height="12" rx="1.5" fill="#1f6fe0"/><path d="M1.6 6.3L4.5 9.2L10.3 3.3" stroke="#fff" stroke-width="1.4" fill="none"/></svg>
<div class="t" style="left:1055.20px;top:284px;font:normal 13px/1 'Liberation Sans',sans-serif;color:#6b7076;letter-spacing:-0.841px;">WM_Week</div>
<svg class="a" style="left:1272.00px;top:285.06px" width="18" height="10" viewBox="0 0 18 10"><circle cx="4.5" cy="5" r="4" fill="#e8782a"/><circle cx="13.4" cy="5" r="3.5" fill="none" stroke="#f0b68e" stroke-width="1"/></svg>
<div class="a" style="left:983px;top:305px;width:376px;height:1px;background:#e2e7ee"></div>
<svg class="a" style="left:992px;top:313px" width="12" height="12" viewBox="0 0 12 12"><rect width="12" height="12" rx="1.5" fill="#1f6fe0"/><path d="M1.6 6.3L4.5 9.2L10.3 3.3" stroke="#fff" stroke-width="1.4" fill="none"/></svg>
<div class="t" style="left:1055.20px;top:312px;font:normal 13px/1 'Liberation Sans',sans-serif;color:#6b7076;letter-spacing:-0.502px;">Daily</div>
<svg class="a" style="left:1272.00px;top:313.88px" width="18" height="10" viewBox="0 0 18 10"><circle cx="4.5" cy="5" r="4" fill="#e8782a"/><circle cx="13.4" cy="5" r="3.5" fill="none" stroke="#f0b68e" stroke-width="1"/></svg>
<div class="a" style="left:983px;top:334px;width:376px;height:1px;background:#e2e7ee"></div>
<svg class="a" style="left:992px;top:342px" width="12" height="12" viewBox="0 0 12 12"><rect width="12" height="12" rx="1.5" fill="#1f6fe0"/><path d="M1.6 6.3L4.5 9.2L10.3 3.3" stroke="#fff" stroke-width="1.4" fill="none"/></svg>
<div class="t" style="left:1055.20px;top:341px;font:normal 13px/1 'Liberation Sans',sans-serif;color:#6b7076;letter-spacing:-0.672px;">Whse_Nbr</div>
<svg class="a" style="left:1272.00px;top:342.70px" width="18" height="10" viewBox="0 0 18 10"><circle cx="4.5" cy="5" r="4" fill="#e8782a"/><circle cx="13.4" cy="5" r="3.5" fill="none" stroke="#f0b68e" stroke-width="1"/></svg>
<div class="a" style="left:983px;top:362px;width:376px;height:1px;background:#e2e7ee"></div>
<svg class="a" style="left:992px;top:370px" width="12" height="12" viewBox="0 0 12 12"><rect width="12" height="12" rx="1.5" fill="#1f6fe0"/><path d="M1.6 6.3L4.5 9.2L10.3 3.3" stroke="#fff" stroke-width="1.4" fill="none"/></svg>
<div class="t" style="left:1055.20px;top:370px;font:normal 13px/1 'Liberation Sans',sans-serif;color:#6b7076;letter-spacing:-0.628px;">Whse_Name</div>
<svg class="a" style="left:1272.00px;top:371.52px" width="18" height="10" viewBox="0 0 18 10"><circle cx="4.5" cy="5" r="4" fill="#e8782a"/><circle cx="13.4" cy="5" r="3.5" fill="none" stroke="#f0b68e" stroke-width="1"/></svg>
<div class="a" style="left:983px;top:391px;width:376px;height:1px;background:#e2e7ee"></div>
<svg class="a" style="left:992px;top:399px" width="12" height="12" viewBox="0 0 12 12"><rect width="12" height="12" rx="1.5" fill="#1f6fe0"/><path d="M1.6 6.3L4.5 9.2L10.3 3.3" stroke="#fff" stroke-width="1.4" fill="none"/></svg>
<div class="t" style="left:1055.20px;top:399px;font:normal 13px/1 'Liberation Sans',sans-serif;color:#6b7076;letter-spacing:-1.011px;">POS_Sales</div>
<svg class="a" style="left:1272.00px;top:400.34px" width="18" height="10" viewBox="0 0 18 10"><circle cx="4.5" cy="5" r="4" fill="#e8782a"/><circle cx="13.4" cy="5" r="3.5" fill="none" stroke="#f0b68e" stroke-width="1"/></svg>
<div class="a" style="left:983px;top:420px;width:376px;height:1px;background:#e2e7ee"></div>
<svg class="a" style="left:992px;top:428px" width="12" height="12" viewBox="0 0 12 12"><rect width="12" height="12" rx="1.5" fill="#1f6fe0"/><path d="M1.6 6.3L4.5 9.2L10.3 3.3" stroke="#fff" stroke-width="1.4" fill="none"/></svg>
<div class="t" style="left:1055.20px;top:428px;font:normal 13px/1 'Liberation Sans',sans-serif;color:#6b7076;letter-spacing:-1.218px;">POS_Qty</div>
<svg class="a" style="left:1272.00px;top:429.16px" width="18" height="10" viewBox="0 0 18 10"><circle cx="4.5" cy="5" r="4" fill="#e8782a"/><circle cx="13.4" cy="5" r="3.5" fill="none" stroke="#f0b68e" stroke-width="1"/></svg>
<div class="a" style="left:983px;top:449px;width:376px;height:1px;background:#e2e7ee"></div>
<svg class="a" style="left:992px;top:457px" width="12" height="12" viewBox="0 0 12 12"><rect width="12" height="12" rx="1.5" fill="#1f6fe0"/><path d="M1.6 6.3L4.5 9.2L10.3 3.3" stroke="#fff" stroke-width="1.4" fill="none"/></svg>
<div class="t" style="left:1055.20px;top:457px;font:normal 13px/1 'Liberation Sans',sans-serif;color:#6b7076;letter-spacing:-0.944px;">POS_Cost</div>
<svg class="a" style="left:1272.00px;top:457.98px" width="18" height="10" viewBox="0 0 18 10"><circle cx="4.5" cy="5" r="4" fill="#e8782a"/><circle cx="13.4" cy="5" r="3.5" fill="none" stroke="#f0b68e" stroke-width="1"/></svg>
<div class="a" style="left:983px;top:478px;width:376px;height:1px;background:#e2e7ee"></div>
<svg class="a" style="left:992px;top:486px" width="12" height="12" viewBox="0 0 12 12"><rect width="12" height="12" rx="1.5" fill="#1f6fe0"/><path d="M1.6 6.3L4.5 9.2L10.3 3.3" stroke="#fff" stroke-width="1.4" fill="none"/></svg>
<div class="t" style="left:1055.20px;top:485px;font:normal 13px/1 'Liberation Sans',sans-serif;color:#6b7076;letter-spacing:-0.676px;">Net_Ship_Qty</div>
<svg class="a" style="left:1272.00px;top:486.80px" width="18" height="10" viewBox="0 0 18 10"><circle cx="4.5" cy="5" r="4" fill="#e8782a"/><circle cx="13.4" cy="5" r="3.5" fill="none" stroke="#f0b68e" stroke-width="1"/></svg>
<div class="a" style="left:983px;top:507px;width:376px;height:1px;background:#e2e7ee"></div>
<svg class="a" style="left:992px;top:515px" width="12" height="12" viewBox="0 0 12 12"><rect width="12" height="12" rx="1.5" fill="#1f6fe0"/><path d="M1.6 6.3L4.5 9.2L10.3 3.3" stroke="#fff" stroke-width="1.4" fill="none"/></svg>
<div class="t" style="left:1055.20px;top:514px;font:normal 13px/1 'Liberation Sans',sans-serif;color:#6b7076;letter-spacing:-0.615px;">Sales_Type</div>
<svg class="a" style="left:1272.00px;top:515.62px" width="18" height="10" viewBox="0 0 18 10"><circle cx="4.5" cy="5" r="4" fill="#e8782a"/><circle cx="13.4" cy="5" r="3.5" fill="none" stroke="#f0b68e" stroke-width="1"/></svg>
<div class="a" style="left:1361px;top:191px;width:5px;height:137px;border-radius:3px;background:#ccd5e0"></div>
<div class="t" style="left:983.00px;top:546px;font:normal 13px/1 'Liberation Sans',sans-serif;color:#2a72d6;letter-spacing:-0.223px;">Advanced options</div>
<div class="a" style="left:990px;top:590px;width:46px;height:25px;border:1px solid #cfd6e0;border-radius:3px;background:#fff"></div>
<div class="t" style="left:1000.30px;top:597px;font:normal 12px/1 'Liberation Sans',sans-serif;color:#2a6fd6;letter-spacing:-0.573px;-webkit-text-stroke:0.35px #2a6fd6;">Back</div>
<div class="a" style="left:1250px;top:590px;width:118px;height:25px;border-radius:3px;background:#2570dc"></div>
<div class="t" style="left:1260.20px;top:597px;font:normal 12px/1 'Liberation Sans',sans-serif;color:#ffffff;letter-spacing:-0.316px;-webkit-text-stroke:0.35px #ffffff;">Save and Continue</div>
</body></html>
